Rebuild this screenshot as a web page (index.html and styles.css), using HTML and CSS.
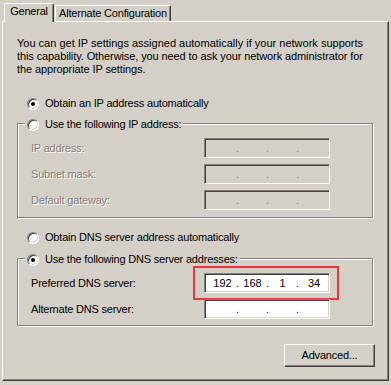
FILE: index.html
```html
<!DOCTYPE html>
<html>
<head>
<meta charset="utf-8">
<link rel="stylesheet" href="styles.css">
</head>
<body>
<div class="dialog">
  <div class="tabs">
    <div class="tab tab-active">General</div>
    <div class="tab tab-alt">Alternate Configuration</div>
  </div>
  <div class="panel">
    <p class="intro"><span class="line line-1">You can get IP settings assigned automatically if your network supports</span><span class="line line-2">this capability. Otherwise, you need to ask your network administrator for</span><span class="line line-3">the appropriate IP settings.</span></p>

    <div class="opt opt-first"><span class="radio on"></span><span>Obtain an IP address automatically</span></div>

    <div class="group group-ip">
      <div class="legend"><span class="radio"></span><span>Use the following IP address:</span></div>
      <div class="rows">
        <div class="row"><span class="label disabled">IP address:</span><div class="ip ip-disabled"><span class="seg"></span><span class="dot">.</span><span class="seg"></span><span class="dot">.</span><span class="seg"></span><span class="dot">.</span><span class="seg"></span></div></div>
        <div class="row"><span class="label disabled">Subnet mask:</span><div class="ip ip-disabled"><span class="seg"></span><span class="dot">.</span><span class="seg"></span><span class="dot">.</span><span class="seg"></span><span class="dot">.</span><span class="seg"></span></div></div>
        <div class="row"><span class="label disabled">Default gateway:</span><div class="ip ip-disabled"><span class="seg"></span><span class="dot">.</span><span class="seg"></span><span class="dot">.</span><span class="seg"></span><span class="dot">.</span><span class="seg"></span></div></div>
      </div>
    </div>

    <div class="opt opt-dns"><span class="radio"></span><span>Obtain DNS server address automatically</span></div>

    <div class="group group-dns">
      <div class="legend"><span class="radio on"></span><span>Use the following DNS server addresses:</span></div>
      <div class="rows">
        <div class="row"><span class="label">Preferred DNS server:</span><div class="ip ip-marked"><span class="seg seg-first">192</span><span class="dot">.</span><span class="seg">168</span><span class="dot">.</span><span class="seg">1</span><span class="dot">.</span><span class="seg">34</span><span class="highlight"></span></div></div>
        <div class="row"><span class="label">Alternate DNS server:</span><div class="ip"><span class="seg"></span><span class="dot">.</span><span class="seg"></span><span class="dot">.</span><span class="seg"></span><span class="dot">.</span><span class="seg"></span></div></div>
      </div>
    </div>

    <div class="actions"><div class="button">Advanced...</div></div>
  </div>
</div>
</body>
</html>
```

FILE: styles.css
```css
* {
  box-sizing: border-box;
}

html,
body {
  margin: 0;
  padding: 0;
}

body {
  width: 391px;
  height: 385px;
  overflow: hidden;
  background: #d4d0c8;
  color: #000;
  font-family: "Liberation Sans", Arial, sans-serif;
  font-size: 11px;
  letter-spacing: -0.2px;
  line-height: 13px;
}

.dialog {
  padding-left: 2px;
}

.tabs {
  display: flex;
  align-items: flex-end;
  height: 21px;
  padding-left: 2px;
}

.tab {
  height: 16px;
  border-top: 1px solid #fff;
  border-left: 1px solid #fff;
  border-right: 1px solid #404040;
  box-shadow: inset -1px 0 #808080;
  border-radius: 2px 2px 0 0;
  display: flex;
  align-items: center;
  justify-content: center;
  white-space: nowrap;
  background: #d4d0c8;
}

.tab-active {
  position: relative;
  z-index: 1;
  width: 50px;
  height: 19px;
  margin-bottom: -1px;
  padding-bottom: 3px;
}

.tab-alt {
  width: 116px;
  margin-left: 1px;
}

.panel {
  width: 387px;
  height: 360px;
  border: 1px solid;
  border-color: #fff #404040 #404040 #fff;
  box-shadow: inset -1px -1px #808080;
  padding: 15px 0 0 14px;
}

.intro {
  margin: 0;
  white-space: nowrap;
}

.line {
  display: block;
}

.line-1 {
  letter-spacing: 0;
}

.line-2,
.line-3 {
  letter-spacing: -0.1px;
}

.opt {
  display: flex;
  align-items: center;
  gap: 6px;
  height: 13px;
  margin-left: 10px;
  white-space: nowrap;
}

.opt-first {
  margin-top: 21px;
}

.opt-dns {
  margin-top: 13px;
}

.radio {
  flex: none;
  width: 12px;
  height: 12px;
  border-radius: 50%;
  border: 1px solid;
  border-color: #808080 #fff #fff #808080;
  box-shadow: inset 1px 1px #404040, inset -1px -1px #d4d0c8;
  background: #fff;
  display: grid;
  place-items: center;
}

.radio.on::after {
  content: "";
  width: 4px;
  height: 4px;
  border-radius: 50%;
  background: #000;
}

.group {
  width: 356px;
  border: 1px solid #808080;
  box-shadow: 1px 1px 0 #fff, inset 1px 1px 0 #fff;
  padding: 0 0 7px 13px;
}

.group-ip {
  margin-top: 13px;
}

.group-dns {
  margin-top: 14px;
  padding-bottom: 6px;
}

.legend {
  display: flex;
  align-items: center;
  gap: 6px;
  width: fit-content;
  height: 13px;
  margin: -6px 0 0 -6px;
  padding: 0 2px;
  background: #d4d0c8;
  white-space: nowrap;
}

.rows {
  display: flex;
  flex-direction: column;
  gap: 6px;
  margin-top: 7px;
}

.row {
  display: grid;
  grid-template-columns: 173px 126px;
  align-items: center;
  height: 20px;
}

.label {
  white-space: nowrap;
}

.disabled {
  color: #808080;
  text-shadow: 1px 1px 0 #fff;
}

.ip {
  position: relative;
  height: 20px;
  border: 1px solid;
  border-color: #808080 #fff #fff #808080;
  box-shadow: inset 1px 1px #404040, inset -1px -1px #d4d0c8;
  background: #fff;
  padding-left: 1px;
  display: grid;
  grid-template-columns: 30px 3px 27px 3px 27px 3px 1fr;
  align-items: center;
  letter-spacing: 0;
}

.ip-disabled {
  background: #d4d0c8;
  color: #808080;
}

.seg {
  text-align: center;
}

.seg-first {
  padding-left: 3px;
}

.dot {
  text-align: center;
}

.highlight {
  position: absolute;
  left: -12px;
  top: -8px;
  right: -10px;
  bottom: -8px;
  border: 2px solid #e3393c;
}

.actions {
  display: flex;
  justify-content: flex-end;
  margin-top: 18px;
  padding-right: 13px;
}

.button {
  width: 91px;
  height: 23px;
  border: 1px solid;
  border-color: #fff #404040 #404040 #fff;
  box-shadow: inset -1px -1px #808080;
  display: flex;
  align-items: center;
  justify-content: center;
}
```
